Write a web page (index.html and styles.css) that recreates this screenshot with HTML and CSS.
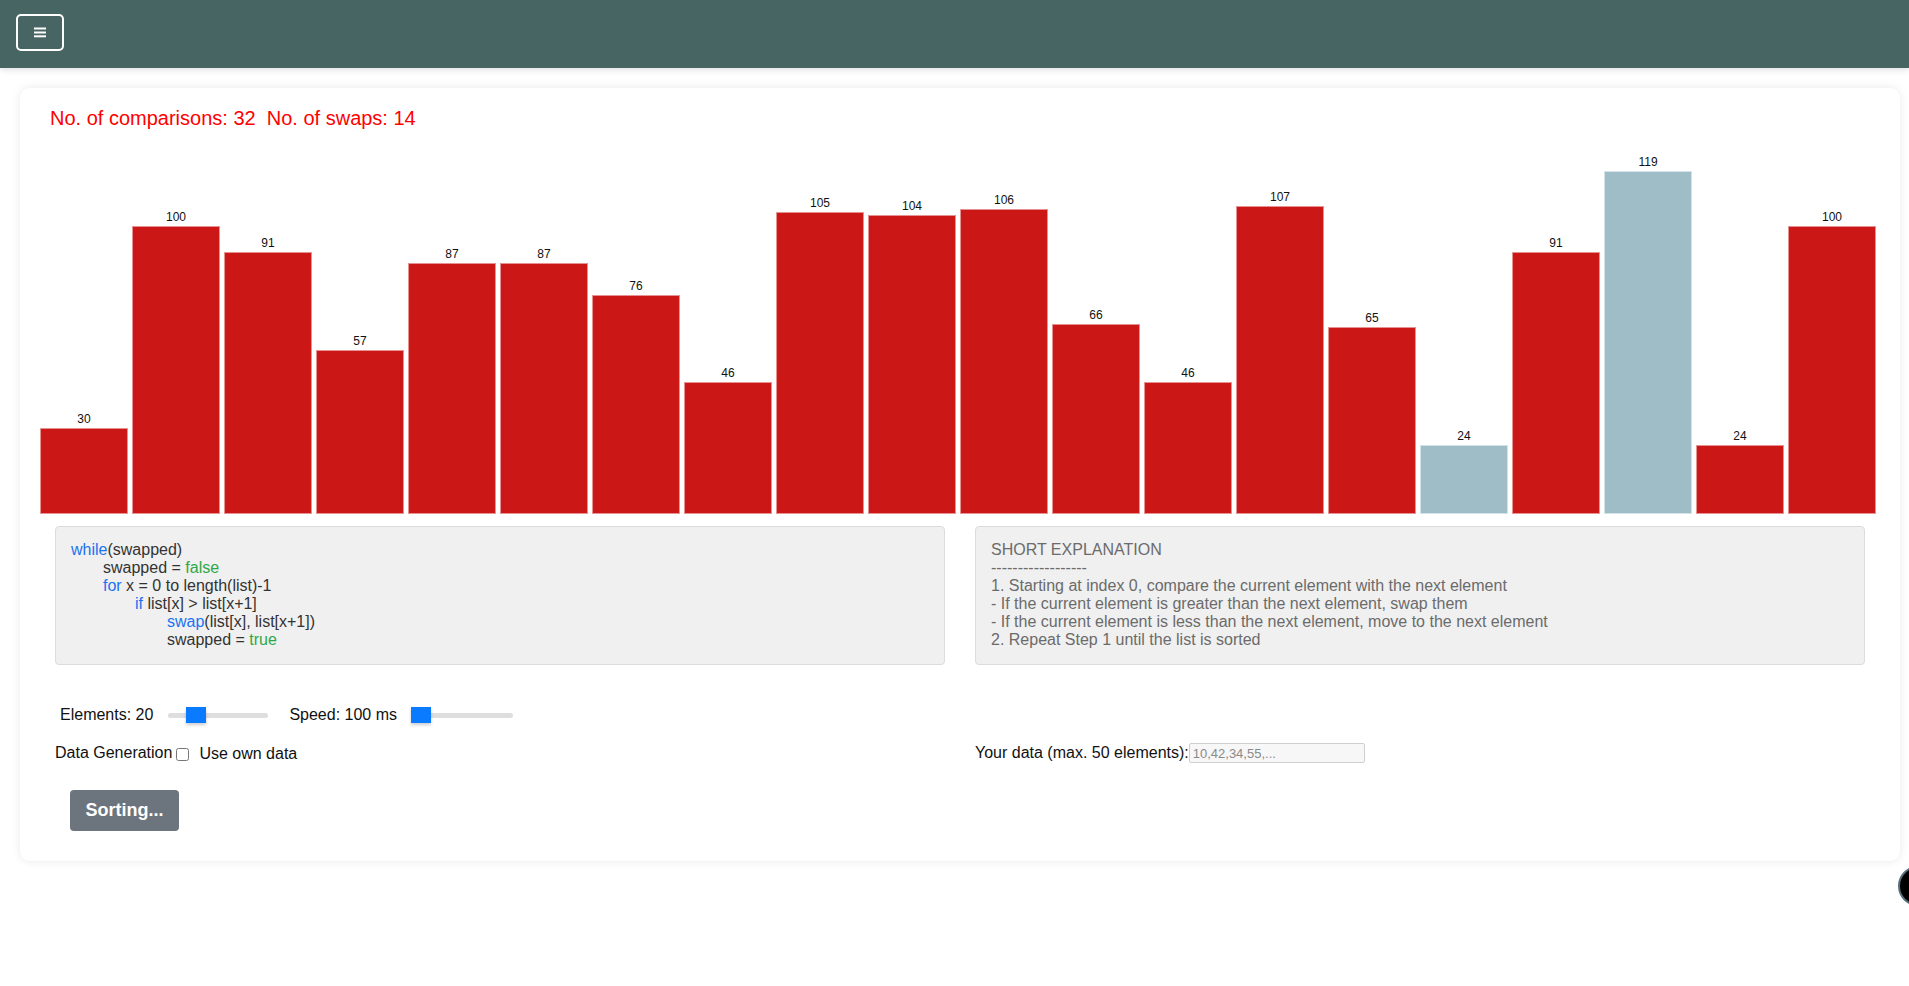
FILE: index.html
```html
<!DOCTYPE html>
<html lang="en">
<head>
<meta charset="utf-8">
<title>Bubble Sort</title>
<link rel="stylesheet" href="styles.css">
</head>
<body>
<header class="topbar">
  <button class="menu-btn" aria-label="menu">
    <svg width="12" height="11" viewBox="0 0 12 11"><rect x="0" y="0.5" width="12" height="2" fill="#fff"/><rect x="0" y="4.5" width="12" height="2" fill="#fff"/><rect x="0" y="8.3" width="12" height="2" fill="#fff"/></svg>
  </button>
</header>
<main class="card">
  <div class="stats">No. of comparisons: 32&nbsp;&nbsp;No. of swaps: 14</div>
  <div class="chart">
    <div class="col"><span class="lbl">30</span><div class="bar" style="height:86px"></div></div>
    <div class="col"><span class="lbl">100</span><div class="bar" style="height:288px"></div></div>
    <div class="col"><span class="lbl">91</span><div class="bar" style="height:262px"></div></div>
    <div class="col"><span class="lbl">57</span><div class="bar" style="height:164px"></div></div>
    <div class="col"><span class="lbl">87</span><div class="bar" style="height:251px"></div></div>
    <div class="col"><span class="lbl">87</span><div class="bar" style="height:251px"></div></div>
    <div class="col"><span class="lbl">76</span><div class="bar" style="height:219px"></div></div>
    <div class="col"><span class="lbl">46</span><div class="bar" style="height:132px"></div></div>
    <div class="col"><span class="lbl">105</span><div class="bar" style="height:302px"></div></div>
    <div class="col"><span class="lbl">104</span><div class="bar" style="height:299px"></div></div>
    <div class="col"><span class="lbl">106</span><div class="bar" style="height:305px"></div></div>
    <div class="col"><span class="lbl">66</span><div class="bar" style="height:190px"></div></div>
    <div class="col"><span class="lbl">46</span><div class="bar" style="height:132px"></div></div>
    <div class="col"><span class="lbl">107</span><div class="bar" style="height:308px"></div></div>
    <div class="col"><span class="lbl">65</span><div class="bar" style="height:187px"></div></div>
    <div class="col"><span class="lbl">24</span><div class="bar bar-active" style="height:69px"></div></div>
    <div class="col"><span class="lbl">91</span><div class="bar" style="height:262px"></div></div>
    <div class="col"><span class="lbl">119</span><div class="bar bar-active" style="height:343px"></div></div>
    <div class="col"><span class="lbl">24</span><div class="bar" style="height:69px"></div></div>
    <div class="col"><span class="lbl">100</span><div class="bar" style="height:288px"></div></div>
  </div>
  <div class="row">
    <div class="half">
      <div class="box code">
        <div><span class="kw">while</span>(swapped)</div>
        <div class="i1">swapped = <span class="bool">false</span></div>
        <div class="i1"><span class="kw">for</span> x = 0 to length(list)-1</div>
        <div class="i2"><span class="kw">if</span> list[x] &gt; list[x+1]</div>
        <div class="i3"><span class="kw">swap</span>(list[x], list[x+1])</div>
        <div class="i3">swapped = <span class="bool">true</span></div>
      </div>
    </div>
    <div class="half">
      <div class="box explain">
        <div>SHORT EXPLANATION</div>
        <div>------------------</div>
        <div>1. Starting at index 0, compare the current element with the next element</div>
        <div>- If the current element is greater than the next element, swap them</div>
        <div>- If the current element is less than the next element, move to the next element</div>
        <div>2. Repeat Step 1 until the list is sorted</div>
      </div>
    </div>
  </div>
  <div class="controls">
    <span class="ctl-label">Elements: 20</span>
    <input class="slider slider-el" type="range" min="5" max="75" value="20">
    <span class="ctl-label speed-label">Speed: 100 ms</span>
    <input class="slider slider-sp" type="range" min="100" max="1000" value="100">
  </div>
  <div class="row datarow">
    <div class="half left-data">
      <span>Data Generation</span><input type="checkbox" class="chk" id="own"><label for="own" class="own-label">Use own data</label>
    </div>
    <div class="half right-data">
      <span>Your data (max. 50 elements):</span><input type="text" class="data-input" placeholder="10,42,34,55,...">
    </div>
  </div>
  <button class="sort-btn">Sorting...</button>
</main>
<div class="fab"></div>
</body>
</html>
```
FILE: styles.css
```css
html, body {
  margin: 0;
  padding: 0;
  background: #fff;
  font-family: "Liberation Sans", Arial, sans-serif;
  color: #222;
}
body {
  width: 1909px;
  height: 986px;
  overflow: hidden;
  position: relative;
}
.topbar {
  height: 68px;
  background: #466563;
  box-shadow: 0 2px 6px rgba(0,0,0,0.12);
  display: flex;
  align-items: center;
  padding-left: 16px;
  box-sizing: border-box;
  position: relative;
  z-index: 2;
}
.menu-btn {
  width: 48px;
  height: 37px;
  margin-top: -4px;
  border: 2px solid #fff;
  border-radius: 5px;
  background: transparent;
  display: flex;
  align-items: center;
  justify-content: center;
  padding: 0;
}
.card {
  display: block;
  margin: 20px 9px 0 20px;
  padding: 19px 20px 30px 20px;
  background: #fff;
  border-radius: 10px;
  box-shadow: 0 0 10px rgba(0,0,0,0.09);
}
.stats {
  color: #ff0000;
  font-size: 20px;
  line-height: 23px;
  padding-left: 10px;
}
.chart {
  height: 384px;
  display: flex;
  align-items: flex-end;
}
.col {
  width: 88px;
  margin-right: 4px;
  display: flex;
  flex-direction: column;
  align-items: center;
}
.lbl {
  font-size: 12px;
  line-height: 14px;
  color: #111;
  margin-bottom: 2px;
}
.bar {
  width: 88px;
  box-sizing: border-box;
  background: #cc1717;
  border: 1px solid #e79292;
}
.bar-active {
  background: #9fbdc6;
  border-color: #d3e3e8;
}
.row {
  display: flex;
}
.half {
  width: 50%;
  padding: 0 15px;
  box-sizing: border-box;
}
.box {
  margin-top: 12px;
  height: 139px;
  box-sizing: border-box;
  background: #f0f0f0;
  border: 1px solid #dcdcdc;
  border-radius: 4px;
  font-size: 16px;
  line-height: 18px;
  padding: 14px 15px 0 15px;
}
.code {
  color: #333;
}
.explain {
  color: #6b6b6b;
}
.kw { color: #1a73f0; }
.bool { color: #2ea84a; }
.i1 { padding-left: 32px; }
.i2 { padding-left: 64px; }
.i3 { padding-left: 96px; }
.controls {
  display: flex;
  align-items: center;
  height: 20px;
  margin-top: 40px;
  padding-left: 20px;
  font-size: 16px;
}
.ctl-label { color: #111; }
.speed-label { margin-left: 21px; }
.slider {
  -webkit-appearance: none;
  appearance: none;
  height: 5px;
  border-radius: 3px;
  background: #dedede;
  margin: 0 0 0 15px;
  padding: 0;
  outline: none;
}
.slider-el { width: 100px; }
.slider-sp { width: 102px; margin-left: 14px; }
.slider::-webkit-slider-thumb {
  -webkit-appearance: none;
  appearance: none;
  width: 20px;
  height: 16px;
  background: #0a7bff;
  border: none;
  box-shadow: 0 2px 3px rgba(0,0,0,0.2);
  cursor: pointer;
}
.slider::-moz-range-thumb {
  width: 20px;
  height: 16px;
  background: #0a7bff;
  border: none;
  border-radius: 0;
}
.datarow {
  margin-top: 18px;
  font-size: 16px;
  align-items: center;
  height: 20px;
  color: #111;
}
.left-data {
  display: flex;
  align-items: center;
  padding-left: 15px;
}
.chk {
  width: 13px;
  height: 13px;
  margin: 2px 0 0 4px;
}
.own-label {
  margin-left: 10px;
  margin-top: 2px;
}
.right-data {
  display: flex;
  align-items: center;
  padding-left: 15px;
}
.data-input {
  width: 176px;
  height: 20px;
  box-sizing: border-box;
  border: 1px solid #cfcfcf;
  border-radius: 2px;
  background: #f7f7f7;
  font-family: "Liberation Sans", Arial, sans-serif;
  font-size: 13px;
  padding: 1px 3px;
  margin: 0;
}
.data-input::placeholder { color: #8a8a8a; }
.sort-btn {
  display: block;
  margin: 27px 0 0 30px;
  width: 109px;
  height: 41px;
  background: #6c757d;
  color: #fff;
  border: none;
  border-radius: 4px;
  font-family: "Liberation Sans", Arial, sans-serif;
  font-weight: bold;
  font-size: 18px;
  padding: 0;
}
.fab {
  position: absolute;
  left: 1898px;
  top: 866px;
  width: 36px;
  height: 36px;
  border-radius: 50%;
  background: #000;
  border: 2px solid #55707c;
}
```
